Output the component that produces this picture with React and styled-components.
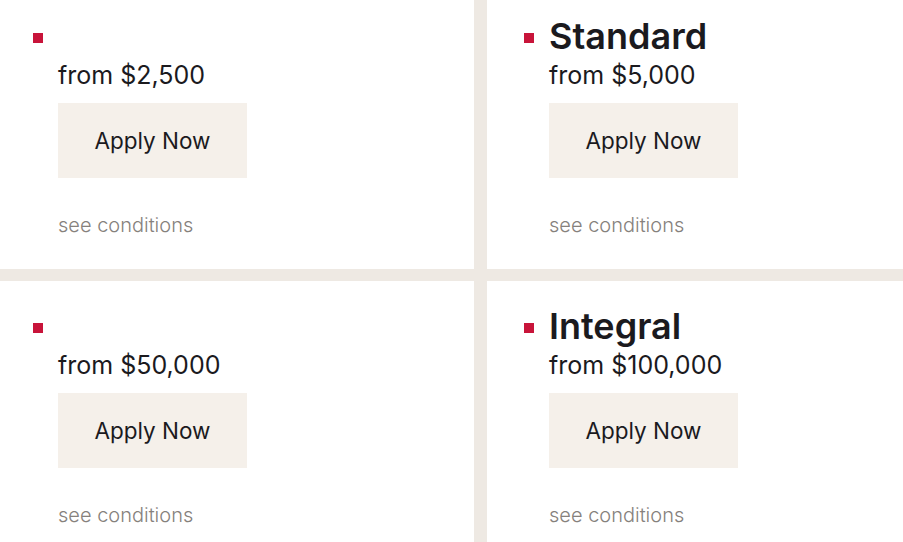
import styled, { createGlobalStyle } from 'styled-components';

const GlobalStyle = createGlobalStyle`
  html, body {
    margin: 0;
    padding: 0;
    background: #ffffff;
    overflow: hidden;
  }
  body {
    font-family: 'Inter', 'Noto Sans', sans-serif;
    color: #1b1a1e;
  }
`;

const Grid = styled.div`
  display: grid;
  grid-template-columns: 474px 1fr;
  column-gap: 13px;
  row-gap: 12px;
  margin-top: -9px;
  background: #eee9e3;
`;

const Card = styled.div`
  background: #ffffff;
  height: 278px;
  box-sizing: border-box;
  padding: 25px 0 0 ${({ $inset }) => $inset}px;
`;

const TitleRow = styled.div`
  display: flex;
  align-items: flex-start;
  gap: 15px;
  height: 40px;
`;

const Bullet = styled.span`
  flex: none;
  width: 10px;
  height: 10px;
  margin-top: 17px;
  background: #c8143a;
`;

const Title = styled.h3`
  margin: 0;
  font-size: 36px;
  line-height: 40px;
  font-weight: 600;
`;

const Body = styled.div`
  padding-left: 25px;
  display: flex;
  flex-direction: column;
  align-items: flex-start;
`;

const Price = styled.p`
  margin: 4px 0 0;
  font-size: 25px;
  line-height: 30px;
  font-weight: 400;
`;

const ApplyButton = styled.button`
  margin-top: 13px;
  width: 189px;
  height: 75px;
  border: none;
  background: #f5f0ea;
  font-family: inherit;
  font-size: 22.5px;
  font-weight: 400;
  color: #1b1a1e;
  cursor: pointer;
`;

const Conditions = styled.a`
  margin-top: 35px;
  font-size: 20px;
  line-height: 24px;
  font-weight: 300;
  color: #86817c;
  text-decoration: none;
`;

const plans = [
  { name: '', price: 'from $2,500', inset: 33 },
  { name: 'Standard', price: 'from $5,000', inset: 37 },
  { name: '', price: 'from $50,000', inset: 33 },
  { name: 'Integral', price: 'from $100,000', inset: 37 },
];

function PlanCard({ name, price, inset }) {
  return (
    <Card $inset={inset}>
      <TitleRow>
        <Bullet />
        <Title>{name}</Title>
      </TitleRow>
      <Body>
        <Price>{price}</Price>
        <ApplyButton>Apply Now</ApplyButton>
        <Conditions href="#">see conditions</Conditions>
      </Body>
    </Card>
  );
}

export default function App() {
  return (
    <>
      <GlobalStyle />
      <Grid>
        {plans.map((plan) => (
          <PlanCard key={plan.price} {...plan} />
        ))}
      </Grid>
    </>
  );
}
